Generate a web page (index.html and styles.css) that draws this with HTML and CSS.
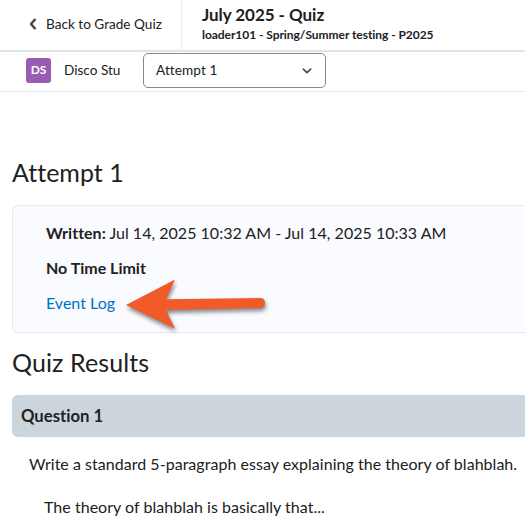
FILE: index.html
```html
<!DOCTYPE html>
<html lang="en"><head><meta charset="utf-8"><title>July 2025 - Quiz</title><link rel="stylesheet" href="styles.css"></head>
<body>
<header class="topbar">
<a class="back"><svg width="8" height="12" viewBox="0 0 8 12"><path d="M5.8 1.7 2 6l3.8 4.3"/></svg><span>Back to Grade Quiz</span></a>
<div class="heading"><h1>July 2025 - Quiz</h1><p>loader101 - Spring/Summer testing - P2025</p></div>
</header>
<div class="userbar"><span class="avatar">DS</span><span class="name">Disco Stu</span>
<div class="select"><span>Attempt 1</span><svg width="12" height="8" viewBox="0 0 12 8"><path d="m2.3 2.2 3.7 3.5 3.7-3.5"/></svg></div></div>
<main>
<h2 class="attempt">Attempt 1</h2>
<section class="card">
<p class="written"><b>Written:</b> Jul 14, 2025 10:32 AM - Jul 14, 2025 10:33 AM</p>
<p class="limit"><b>No Time Limit</b></p>
<p class="log"><a>Event Log</a></p>
<svg class="arrow" width="150" height="60" viewBox="0 0 150 60"><path d="M4 31 53 5.5 44 25.3 138 24Q143 24 143 29T138 34L44 36 53 54.7Z"/></svg>
</section>
<h2 class="results">Quiz Results</h2>
<h3 class="question">Question 1</h3>
<p class="prompt">Write a standard 5-paragraph essay explaining the theory of blahblah.</p>
<p class="answer">The theory of blahblah is basically that...</p>
</main></body></html>
```
FILE: styles.css
```css
*{box-sizing:border-box}
body,h1,h2,h3,p{margin:0}
body{width:525px;height:523px;overflow:hidden;background:#fff;color:#202122;font:16px/24px Lato,sans-serif;font-variant-ligatures:none;white-space:nowrap}
.topbar{height:52px;display:flex;border-bottom:2px solid #e1e4e7}
.back{width:182px;border-right:1px solid #e8ebf2;padding:12px 0 0 29px;font-size:13.6px;display:flex;gap:9px}
.back svg{margin-top:6px;stroke-width:2.5}
svg{fill:none;stroke:#494c4e;stroke-width:1.7;stroke-linecap:round;stroke-linejoin:round}
.heading{padding:5px 0 0 20px}
h1{font-size:17px;line-height:20px;letter-spacing:-.05px}
.heading p{font-size:12px;line-height:20px;font-weight:700;letter-spacing:-.05px}
.userbar{height:40px;display:flex;align-items:center;border-bottom:1px solid #e6e9ed;padding:0 0 2px 26px;font-size:13.6px}
.avatar{width:25px;height:25px;border-radius:3px;background:#9a5cb1;color:#fff;font-weight:700;font-size:12px;text-align:center}
.name{margin-left:13px;width:79px;line-height:22px;padding-bottom:2px}
.select{width:183px;height:35px;border:1px solid #85888b;border-radius:5px;display:flex;align-items:center;justify-content:space-between;padding:0 12px 0 12px}
.select span{padding-bottom:1px;letter-spacing:.1px}
main{padding-left:12px}
h2{font-size:25px;line-height:32px;font-weight:400}
.attempt{padding-top:64px;letter-spacing:.03px}
.card{position:relative;margin-top:17px;height:128px;border:1px solid #e6e9f2;border-right:0;border-radius:6px 0 0 6px;background:#f9fbff;padding:15px 0 0 33px}
.card p{height:35px}
.written{letter-spacing:.02px}
.log{color:#0072c6}
.arrow{position:absolute;left:109px;top:68px;fill:#f15a29;stroke:none;filter:drop-shadow(1px 3px 2px #0007)}
.results{margin-top:13px;letter-spacing:.1px}
.question{margin-top:17px;height:42px;line-height:42px;font-size:16.7px;background:#cdd5dc;border-radius:6px 0 0 6px;padding-left:9px}
.prompt{padding:15px 0 0 17px;letter-spacing:.03px}
.answer{padding:19px 0 0 32px;letter-spacing:.03px}
```
